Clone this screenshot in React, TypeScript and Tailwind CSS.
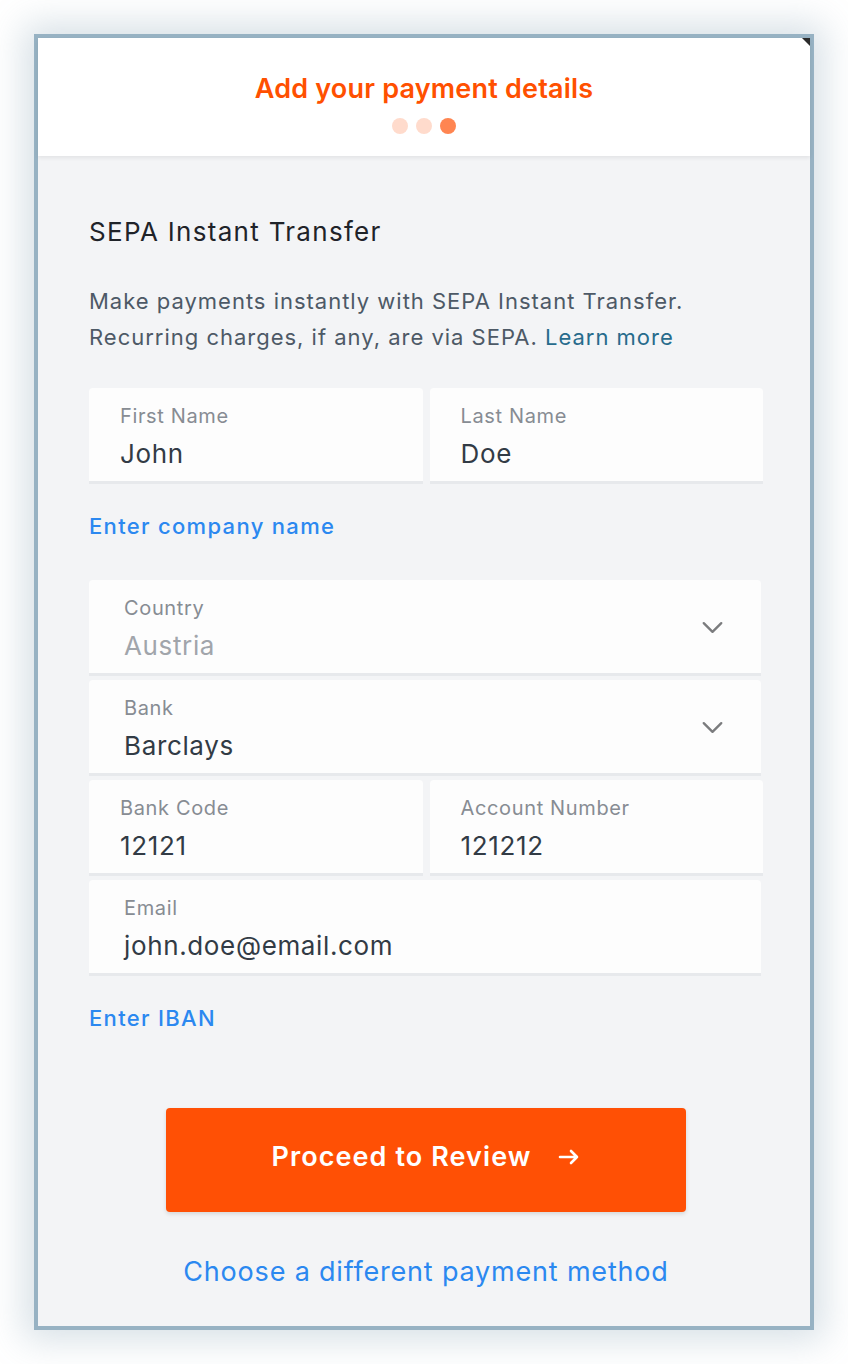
import { ChevronDown } from "lucide-react";

function Field({ label, value, pad = "pl-[31px]", muted = false, chevron = false, className = "" }: {
    label: string;
    value: string;
    pad?: string;
    muted?: boolean;
    chevron?: boolean;
    className?: string;
}) {
    return (
        <div className={`relative h-[96px] bg-[#fdfdfd] rounded-t-[4px] border-b-[3px] border-[#e7e9ec] ${pad} pt-[14px] flex flex-col tracking-[0.04em] ${className}`}>
            <span className="text-[20px] leading-[28px] text-[#878c93]">{label}</span>
            <span className={`text-[26px] leading-[36px] mt-[6px] ${muted ? "text-[#a1a5ab]" : "text-[#323b45]"}`}>{value}</span>
            {chevron && (
                <ChevronDown className="absolute right-[31px] top-[30px] w-[35px] h-[35px] text-[#7b7c7e]" strokeWidth={1.6} />
            )}
        </div>
    );
}

export default function App() {
    return (
        <div className="min-h-[1364px] bg-white pt-[34px] pl-[34px]" style={{ fontFamily: "Inter, 'Noto Sans', sans-serif" }}>
            <div className="relative w-[780px] h-[1296px] border-[4px] border-[#97b2c3] bg-[#f3f4f6] shadow-[0_0_34px_10px_rgba(110,145,165,0.28)] flex flex-col">
                {/* Header */}
                <div className="relative h-[118px] bg-white shadow-[0_2px_4px_rgba(0,0,0,0.07)] flex flex-col items-center">
                    <h1 className="mt-[34px] text-[27px] leading-[34px] font-semibold tracking-[0.2px] text-[#ff5000]">Add your payment details</h1>
                    <div className="mt-[12px] flex gap-[8px]">
                        <span className="w-[16px] h-[16px] rounded-full bg-[#ffdbcc]" />
                        <span className="w-[16px] h-[16px] rounded-full bg-[#ffdbcc]" />
                        <span className="w-[16px] h-[16px] rounded-full bg-[#ff8551]" />
                    </div>
                    <div className="absolute right-0 top-0 w-0 h-0 border-t-[8px] border-l-[8px] border-t-[#2b2b2b] border-l-transparent" />
                </div>

                {/* Body */}
                <div className="pl-[51px] pr-[47px] flex flex-col tracking-[0.04em]">
                    <h2 className="mt-[60px] text-[26px] leading-[32px] tracking-[0.05em] text-[#1f2329]">SEPA Instant Transfer</h2>
                    <p className="mt-[35px] text-[22px] leading-[36px] tracking-[0.045em] text-[#4d5966]">
                        Make payments instantly with SEPA Instant Transfer.
                        <br />
                        Recurring charges, if any, are via SEPA. <span className="text-[#276b8c]">Learn more</span>
                    </p>

                    <div className="mt-[33px] grid grid-cols-2 gap-[7px]">
                        <Field label="First Name" value="John" />
                        <Field label="Last Name" value="Doe" />
                    </div>

                    <a className="mt-[27px] text-[22px] leading-[30px] font-medium tracking-[0.06em] text-[#2b88f0]">Enter company name</a>

                    <div className="mt-[39px] flex flex-col gap-[4px]">
                        <Field label="Country" value="Austria" pad="pl-[35px]" muted chevron className="w-[672px]" />
                        <Field label="Bank" value="Barclays" pad="pl-[35px]" chevron className="w-[672px]" />
                        <div className="grid grid-cols-2 gap-[7px]">
                            <Field label="Bank Code" value="12121" />
                            <Field label="Account Number" value="121212" />
                        </div>
                        <Field label="Email" value="john.doe@email.com" pad="pl-[35px]" className="w-[672px]" />
                    </div>

                    <a className="mt-[27px] text-[22px] leading-[30px] font-medium tracking-[0.06em] text-[#2b88f0]">Enter IBAN</a>
                </div>

                <div className="mt-[75px] pl-[4px] flex flex-col items-center">
                    <button className="w-[520px] h-[104px] rounded-[4px] bg-[#ff5005] shadow-[0_2px_4px_rgba(0,0,0,0.12)] flex items-center justify-center gap-[25px] pb-[6px] text-white text-[27px] font-semibold tracking-[0.04em]">
                        Proceed to Review
                        <svg className="w-[24px] h-[24px]" viewBox="0 0 24 24" fill="none" stroke="currentColor" strokeWidth={2.6} strokeLinecap="round" strokeLinejoin="round">
                            <path d="M3 12h17M14 6l6 6-6 6" />
                        </svg>
                    </button>
                    <a className="mt-[42px] text-[27px] leading-[36px] tracking-[0.03em] text-[#2b88f0]">Choose a different payment method</a>
                </div>
            </div>
        </div>
    );
}
